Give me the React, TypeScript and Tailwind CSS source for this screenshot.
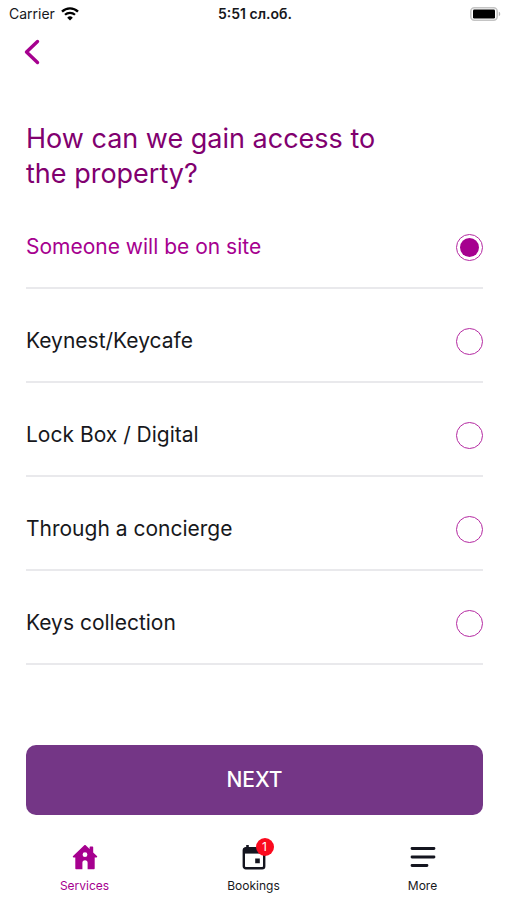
import clsx from "clsx";
import React, { useState } from "react";

const options = [
  { id: "on-site", label: "Someone will be on site" },
  { id: "keynest", label: "Keynest/Keycafe" },
  { id: "lock-box", label: "Lock Box / Digital" },
  { id: "concierge", label: "Through a concierge" },
  { id: "collection", label: "Keys collection" },
];

function WifiIcon() {
  return (
    <svg viewBox="0 0 18 14" className="w-[18px] h-[14px]" fill="none" aria-hidden="true">
      <path d="M1 4.6a11.5 11.5 0 0 1 16 0" stroke="#000" strokeWidth="2.4" />
      <path d="M4 7.8a7.2 7.2 0 0 1 10 0" stroke="#000" strokeWidth="2.2" />
      <path d="M9 13.6 6.2 10.7a4 4 0 0 1 5.6 0z" fill="#000" />
    </svg>
  );
}

function BatteryIcon() {
  return (
    <svg viewBox="0 0 31 14" className="w-[31px] h-[14px]" fill="none" aria-hidden="true">
      <rect x="0.8" y="0.8" width="26.4" height="12.4" rx="3.6" stroke="#c4c4c4" strokeWidth="1.6" />
      <rect x="3" y="2.6" width="22" height="8.8" rx="1.2" fill="#000" />
      <path d="M28.8 4.8c1.9.6 1.9 3.8 0 4.4z" fill="#b5b5b5" />
    </svg>
  );
}

function HomeIcon() {
  return (
    <svg viewBox="0 0 26 26" className="w-[26px] h-[26px]" aria-hidden="true">
      <path
        fill="#a6008f"
        fillRule="evenodd"
        d="M12.3 1.3c.4-.4 1-.4 1.400 0L17.600 5V3.200c0-.4.3-.7.7-.7h2.200c.4 0 .7.3.7.7v5.300l3.700 3.600c.6.600.3 1.500-.5 1.500h-1.700v10.600c0 .6-.4 1-1 1h-6.100v-6.400a2.600 2.600 0 0 0-5.200 0v6.400H4.300c-.6 0-1-.4-1-1V13.600H1.600c-.8 0-1.100-.9-.5-1.500zM13 8.300a2.400 2.400 0 1 0 0 4.800 2.400 2.400 0 0 0 0-4.800z"
      />
    </svg>
  );
}

function CalendarIcon() {
  return (
    <svg viewBox="0 0 24 26" className="w-6 h-[26px]" fill="none" aria-hidden="true">
      <path d="M5.500 1v4M18.500 1v4" stroke="#14151f" strokeWidth="2.600" />
      <rect x="1.800" y="4.300" width="20.400" height="20" rx="2" stroke="#14151f" strokeWidth="2.400" />
      <path d="M1.500 4h21v5.600h-21z" fill="#14151f" />
      <path d="M13.200 14.600h4.600v4.600h-4.600z" fill="#14151f" />
    </svg>
  );
}

function MoreIcon() {
  return (
    <svg viewBox="0 0 26 26" className="w-[26px] h-[26px]" fill="none" aria-hidden="true">
      <path
        d="M2 4.500h22M2 13h22M2 21.500h15"
        stroke="#14151f"
        strokeWidth="2.800"
        strokeLinecap="round"
      />
    </svg>
  );
}

const tabs = [
  { label: "Services", icon: HomeIcon, active: true, badge: 0 },
  { label: "Bookings", icon: CalendarIcon, active: false, badge: 1 },
  { label: "More", icon: MoreIcon, active: false, badge: 0 },
];

export default function App() {
  const [selected, setSelected] = useState("on-site");

  return (
    <div className="min-h-screen flex flex-col bg-white text-[#17181c] font-['Inter',sans-serif]">
      {/* Status bar */}
      <div className="grid grid-cols-3 items-center h-7 pl-[9px] pr-1.5 text-sm">
        <div className="flex items-center gap-1.5">
          <span>Carrier</span>
          <WifiIcon />
        </div>
        <span className="text-center font-semibold whitespace-nowrap">5:51 сл.об.</span>
        <div className="flex justify-end">
          <BatteryIcon />
        </div>
      </div>

      {/* Header */}
      <header className="flex items-center h-12 px-6">
        <button type="button" aria-label="Back">
          <svg viewBox="0 0 16 26" className="w-4 h-[26px]" fill="none" aria-hidden="true">
            <path
              d="M13.500 2.500 2.500 13l11 10.500"
              stroke="#a6008f"
              strokeWidth="3.400"
              strokeLinecap="round"
              strokeLinejoin="round"
            />
          </svg>
        </button>
      </header>

      <main className="flex-1 flex flex-col pl-[26px] pr-6 pt-[45px]">
        <h1 className="max-w-96 text-[27px] leading-[35px] text-[#81006f]">
          How can we gain access to the property?
        </h1>

        {/* Access options */}
        <div role="radiogroup" aria-label="Property access" className="mt-1">
          {options.map((option) => (
            <label
              key={option.id}
              htmlFor={option.id}
              className={clsx(
                "flex items-center justify-between h-[94px] pt-3 border-b-2 border-[#e9e9ec] text-[21px]",
                selected === option.id && "text-[#a6008f]",
              )}
            >
              {option.label}
              <input
                id={option.id}
                type="radio"
                name="access"
                checked={selected === option.id}
                onChange={() => setSelected(option.id)}
                className="appearance-none shrink-0 size-[27px] rounded-full border border-[#b52aa2] p-[3px] bg-clip-content checked:bg-[#a6008f]"
              />
            </label>
          ))}
        </div>

        <button
          type="button"
          className="mt-auto h-[70px] rounded-[10px] bg-[#743686] text-white text-[21px] font-medium"
        >
          NEXT
        </button>
      </main>

      {/* Tab bar */}
      <nav className="grid grid-cols-3 h-[85px] pt-[29px]">
        {tabs.map(({ label, icon: Icon, active, badge }) => (
          <a
            key={label}
            href={`#${label.toLowerCase()}`}
            className={clsx("flex flex-col items-center gap-2 text-xs", active && "text-[#a6008f]")}
          >
            <span className="relative">
              <Icon />
              {badge > 0 && (
                <span className="absolute -top-1.5 -right-2 flex items-center justify-center size-[18px] rounded-full bg-[#fb0a1e] text-white text-xs">
                  {badge}
                </span>
              )}
            </span>
            {label}
          </a>
        ))}
      </nav>
    </div>
  );
}
